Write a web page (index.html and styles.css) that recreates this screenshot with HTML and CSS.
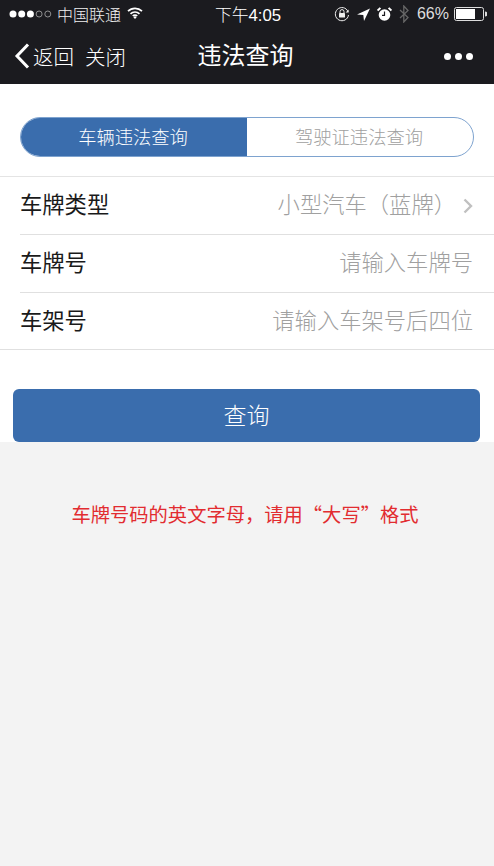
FILE: index.html
```html
<!DOCTYPE html>
<html lang="zh-CN">
<head>
<meta charset="utf-8">
<title>违法查询</title>
<link rel="stylesheet" href="styles.css">
</head>
<body>
<header class="top">
  <div class="status">
    <div class="status-left">
      <svg class="dots" width="44" height="10" viewBox="0 0 44 10"><circle cx="4" cy="5" r="3.500" fill="#fff"/><circle cx="12.700" cy="5" r="3.500" fill="#fff"/><circle cx="21.400" cy="5" r="3.500" fill="#fff"/><circle cx="30.100" cy="5" r="3" fill="none" stroke="#aaa" stroke-width=".8"/><circle cx="38.800" cy="5" r="3" fill="none" stroke="#aaa" stroke-width=".8"/></svg>
      <span class="carrier">中国联通</span>
      <svg class="wifi" width="16" height="12" viewBox="0 0 16 12"><path d="M1 4.200a10 10 0 0 1 14 0M3.500 6.800a6.500 6.500 0 0 1 9 0M5.800 9a3 3 0 0 1 4.400 0" fill="none" stroke="#fff" stroke-width="1.700"/><path d="M8 12l-1.600-1.800a2.200 2.200 0 0 1 3.200 0z" fill="#fff"/></svg>
    </div>
    <div class="clock">下午4:05</div>
    <div class="status-right">
      <svg width="16" height="16" viewBox="0 0 16 16"><path d="M14 5.500A6.600 6.600 0 1 0 14.500 9" fill="none" stroke="#eee" stroke-width="1"/><path d="M14.600 3.500v3h-3z" fill="#eee"/><rect x="5" y="7" width="6" height="4.500" rx=".6" fill="#eee"/><path d="M6 7V5.600a2 2 0 0 1 4 0V7" fill="none" stroke="#eee"/></svg>
      <svg class="gps" width="13" height="13" viewBox="0 0 13 13"><path d="M13 .5L0 6.500l6.300.4.700 6z" fill="#fff"/></svg>
      <svg class="alarm" width="15" height="15" viewBox="0 0 15 15"><circle cx="7.500" cy="8" r="5.800" fill="#fff"/><path d="M7.500 4.500v3.800h-2.500" fill="none" stroke="#1b1b1f" stroke-width="1.200"/><path d="M.6 3.600L3.400.9M14.400 3.600L11.600.9" stroke="#fff" stroke-width="2"/></svg>
      <svg class="bt" width="10" height="18" viewBox="0 0 10 18"><path d="M1 5l8 7.500-4.200 4.500V1L9 5.500 1 13" fill="none" stroke="#666" stroke-width="1.300"/></svg>
      <span class="pct">66%</span>
      <svg width="33" height="14" viewBox="0 0 33 14"><rect x=".5" y=".5" width="29" height="13" rx="2" fill="none" stroke="#ddd"/><rect x="2" y="2" width="19" height="10" fill="#fff"/><path d="M31 4.500a2.500 2.500 0 0 1 0 5z" fill="#ddd"/></svg>
    </div>
  </div>
  <nav class="nav">
    <div class="nav-left">
      <svg width="16" height="26" viewBox="0 0 16 26"><path d="M14 1.500L3 13l11 11.500" fill="none" stroke="#fff" stroke-width="3"/></svg>
      <span class="back">返回</span>
      <span class="close">关闭</span>
    </div>
    <h1 class="title">违法查询</h1>
    <div class="more"><i></i><i></i><i></i></div>
  </nav>
</header>
<main class="card">
  <div class="tabs">
    <div class="tab tab-on">车辆违法查询</div>
    <div class="tab">驾驶证违法查询</div>
  </div>
  <div class="form">
    <div class="row"><span class="label">车牌类型</span><span class="value">小型汽车（蓝牌）<svg class="chev" width="10" height="16" viewBox="0 0 10 16"><path d="M1.500 1.500L8 8l-6.500 6.500" fill="none" stroke="#c0c0c0" stroke-width="2.400"/></svg></span></div>
    <div class="row"><span class="label">车牌号</span><span class="value">请输入车牌号</span></div>
    <div class="row"><span class="label">车架号</span><span class="value">请输入车架号后四位</span></div>
  </div>
  <button class="submit" type="button">查询</button>
</main>
<p class="note">车牌号码的英文字母，请用“大写”格式</p>
</body>
</html>
```
FILE: styles.css
```css
* { box-sizing: border-box; }
html, body { margin: 0; padding: 0; }
body {
  width: 494px;
  height: 866px;
  overflow: hidden;
  background: #f3f3f3;
  font-family: "Noto Sans CJK SC", "Liberation Sans", sans-serif;
  font-weight: 300;
}
.top { height: 84px; background: #1b1b1f; color: #fff; }
.status {
  height: 28px;
  padding: 0 7px 0 9px;
  display: grid;
  grid-template-columns: 1fr auto 1fr;
  align-items: center;
  font-size: 16px;
}
.status-left { display: flex; align-items: center; gap: 4px; padding-bottom: 1px; }
.wifi { margin-left: 2px; margin-bottom: 2px; }
.carrier { color: #f0f0f0; }
.clock { font-family: "Liberation Sans", "Noto Sans CJK SC", sans-serif; font-size: 16.800px; padding-bottom: 1px; }
.status-right { display: flex; justify-content: flex-end; align-items: center; gap: 7px; }
.pct { font-family: "Liberation Sans", sans-serif; font-size: 16px; color: #ddd; margin-left: 1px; margin-right: -2px; padding-bottom: 1px; }
.nav { height: 56px; display: grid; grid-template-columns: 1fr auto 1fr; align-items: center; padding: 0 21px 0 14px; }
.nav-left { display: flex; align-items: center; font-size: 20.500px; line-height: 28px; }
.back { margin-left: 3px; }
.close { margin-left: 11px; }
.title { margin: 0 0 4px 4px; font-size: 24px; font-weight: 400; line-height: 32px; }
.more { display: flex; justify-content: flex-end; gap: 4px; }
.more i { width: 7px; height: 7px; border-radius: 50%; background: #fff; }
.card { height: 358px; background: #fff; padding-top: 33px; }
.tabs {
  height: 40px;
  margin: 0 20px;
  display: grid;
  grid-template-columns: 1fr 1fr;
  border: 1px solid #7ea3cf;
  border-radius: 20px;
  overflow: hidden;
}
.tab { display: flex; align-items: center; justify-content: center; padding: 0 2px 2px 0; font-size: 18.300px; color: #a0a0a0; }
.tab-on { background: #3a6dad; color: #fff; }
.form { margin-top: 19px; border-top: 1px solid #e4e4e4; }
.row {
  height: 58px;
  margin-left: 20px;
  padding-right: 21px;
  padding-bottom: 5px;
  display: flex;
  align-items: center;
  justify-content: space-between;
  border-bottom: 1px solid #e0e0e0;
  font-size: 22.300px;
}
.row:last-child { margin-left: 0; padding-left: 20px; height: 57px; }
.label { color: #1a1a1a; font-weight: 400; }
.value { color: #a0a0a0; display: flex; align-items: center; }
.chev { margin-left: 7px; margin-top: 5px; }
.submit {
  display: block;
  width: 467px;
  height: 53px;
  margin: 39px 0 0 13px;
  padding: 0 0 4px;
  border: 0;
  border-radius: 6px;
  background: #3a6dad;
  color: #fff;
  font: inherit;
  font-size: 23px;
}
.note { margin: 57px 0 0; padding-right: 4px; text-align: center; font-size: 19.300px; font-weight: 400; line-height: 30px; color: #e22c30; }
```
